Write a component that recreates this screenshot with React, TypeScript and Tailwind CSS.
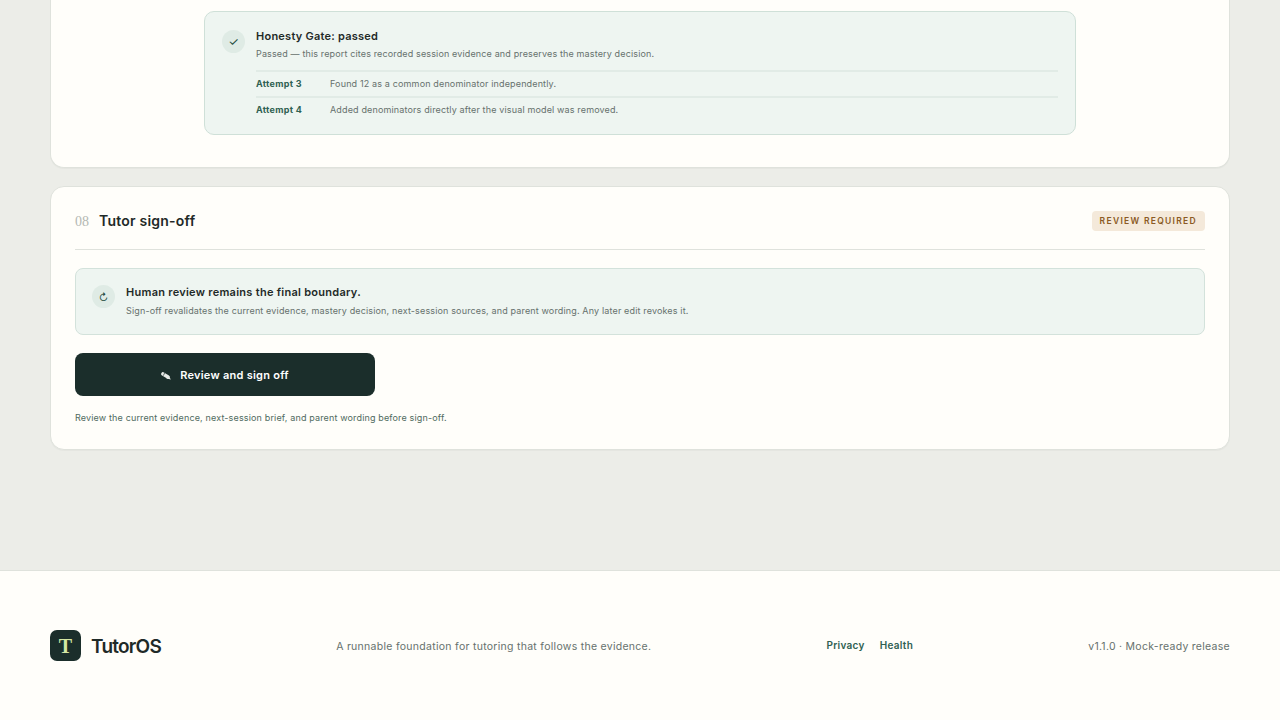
const attempts = [
  { label: "Attempt 3", text: "Found 12 as a common denominator independently." },
  { label: "Attempt 4", text: "Added denominators directly after the visual model was removed." },
];

export default function App() {
  return (
    <div className="flex h-screen flex-col overflow-hidden bg-[#ecede8] font-['Inter',sans-serif] text-[#1f2a28]">
      <main className="flex h-[570px] flex-col gap-[18px] px-[50px]">
        <section className="flex h-[168px] items-start justify-center rounded-b-[14px] border border-t-0 border-[#dfe2dc] bg-[#fffefa] pt-[11px] shadow-[0_1px_1px_rgba(30,40,35,0.03)]">
          <div className="flex w-[872px] gap-[11px] rounded-[10px] border border-[#cfe0d8] bg-[#eef5f1] px-[17px] pb-[12px] pt-[17px]">
            <div className="mt-[1px] flex h-[23px] w-[23px] shrink-0 items-center justify-center rounded-full bg-[#dfebe5] text-[12px] leading-none text-[#234b41]">
              ✓
            </div>
            <div className="min-w-0 flex-1">
              <h3 className="text-[11px] font-semibold leading-[14px] tracking-[0.24px]">Honesty Gate: passed</h3>
              <p className="mt-[5px] text-[9px] leading-[12px] tracking-[0.14px] text-[#66716d]">
                Passed — this report cites recorded session evidence and preserves the mastery decision.
              </p>
              <div className="mt-[10px]">
                {attempts.map((item) => (
                  <div key={item.label} className="flex h-[26px] items-center border-t-2 border-[#e1ebe6] text-[9px] tracking-[0.15px]">
                    <span className="w-[74px] font-bold tracking-[0.3px] text-[#2f6152]">{item.label}</span>
                    <span className="text-[#66716d]">{item.text}</span>
                  </div>
                ))}
              </div>
            </div>
          </div>
        </section>

        <section className="h-[264px] rounded-[14px] border border-[#dfe2dc] bg-[#fffefa] px-[24px] shadow-[0_1px_1px_rgba(30,40,35,0.03)]">
          <div className="flex h-[63px] items-center justify-between border-b border-[#dfe2dc] pt-[6px]">
            <div className="flex items-center gap-[10px]">
              <span className="font-['Liberation_Serif',serif] text-[14px] text-[#b4b8b3]">08</span>
              <h2 className="mb-[2px] text-[14px] font-semibold tracking-[0.22px]">Tutor sign-off</h2>
            </div>
            <span className="rounded-[4px] bg-[#f4e9da] px-[8px] py-[5px] text-[8.5px] font-semibold leading-[10px] tracking-[1.3px] text-[#8a5a24]">
              REVIEW REQUIRED
            </span>
          </div>

          <div className="mt-[18px] flex h-[67px] gap-[11px] rounded-[8px] border border-[#d3e2db] bg-[#eef5f1] px-[16px] pt-[16px]">
            <div className="flex h-[23px] w-[23px] shrink-0 items-center justify-center rounded-full bg-[#dfebe5] pt-[1px] text-[10px] leading-none text-[#234b41]">
              ↻
            </div>
            <div>
              <h3 className="text-[11px] font-semibold leading-[14px] tracking-[0.27px]">Human review remains the final boundary.</h3>
              <p className="mt-[6px] text-[9px] leading-[12px] tracking-[0.15px] text-[#66716d]">
                Sign-off revalidates the current evidence, mastery decision, next-session sources, and parent wording. Any later edit revokes it.
              </p>
            </div>
          </div>

          <button className="mt-[18px] flex h-[43px] w-[300px] items-center justify-center gap-[9px] rounded-[8px] bg-[#1b2e2b] pt-[1px] text-[11px] font-semibold tracking-[0.26px] text-white">
            <svg width="10" height="8" viewBox="0 0 10 8" className="mt-[1px] shrink-0">
              <path d="M2 2 L7 5" stroke="#e8ebe8" strokeWidth="3.6" strokeLinecap="round" />
              <path d="M7 3.6 L10 7.6 L5.4 6.6 Z" fill="#e8ebe8" />
              <path d="M3.6 1 L2.4 3.6" stroke="#1b2e2b" strokeWidth="0.7" />
            </svg>
            Review and sign off
          </button>
          <p className="mt-[16px] text-[9px] leading-[12px] tracking-[0.15px] text-[#4f6b60]">
            Review the current evidence, next-session brief, and parent wording before sign-off.
          </p>
        </section>
      </main>

      <footer className="flex h-[150px] items-center justify-between border-t border-[#dfe2dc] bg-[#fffefa] px-[50px]">
        <div className="flex items-center gap-[10px]">
          <div className="flex h-[31px] w-[31px] items-center justify-center rounded-[7px] bg-[#1b2e2b] font-['Liberation_Serif',serif] text-[20px] font-bold leading-none text-[#d5e6a3]">
            T
          </div>
          <span className="mt-[4px] text-[19px] font-semibold tracking-[-0.04em]">TutorOS</span>
        </div>
        <p className="mt-[2px] text-[10.5px] tracking-[0.28px] text-[#66716d]">A runnable foundation for tutoring that follows the evidence.</p>
        <nav className="flex gap-[15px] text-[10px] font-semibold tracking-[0.3px] text-[#2f6152]">
          <a>Privacy</a>
          <a>Health</a>
        </nav>
        <p className="mt-[2px] text-[10.5px] tracking-[0.28px] text-[#66716d]">v1.1.0 · Mock-ready release</p>
      </footer>
    </div>
  );
}
